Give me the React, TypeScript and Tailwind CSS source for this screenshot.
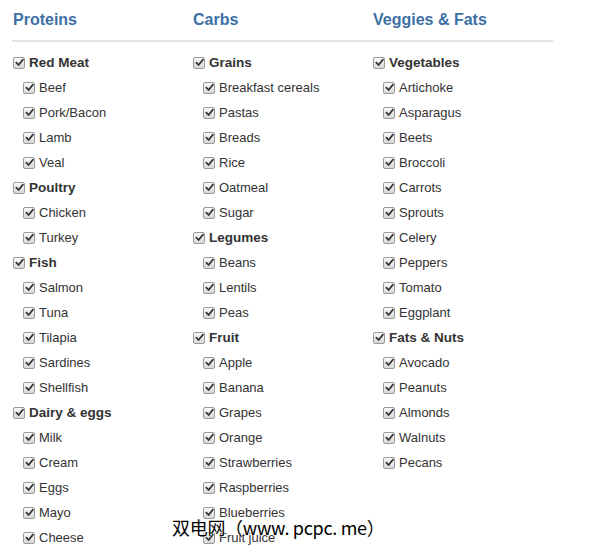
import React from 'react';

type Group = { name: string; items: string[] };
type Column = { title: string; groups: Group[] };

const columns: Column[] = [
  {
    title: 'Proteins',
    groups: [
      { name: 'Red Meat', items: ['Beef', 'Pork/Bacon', 'Lamb', 'Veal'] },
      { name: 'Poultry', items: ['Chicken', 'Turkey'] },
      { name: 'Fish', items: ['Salmon', 'Tuna', 'Tilapia', 'Sardines', 'Shellfish'] },
      { name: 'Dairy & eggs', items: ['Milk', 'Cream', 'Eggs', 'Mayo', 'Cheese'] },
    ],
  },
  {
    title: 'Carbs',
    groups: [
      { name: 'Grains', items: ['Breakfast cereals', 'Pastas', 'Breads', 'Rice', 'Oatmeal', 'Sugar'] },
      { name: 'Legumes', items: ['Beans', 'Lentils', 'Peas'] },
      {
        name: 'Fruit',
        items: ['Apple', 'Banana', 'Grapes', 'Orange', 'Strawberries', 'Raspberries', 'Blueberries', 'Fruit juice'],
      },
    ],
  },
  {
    title: 'Veggies & Fats',
    groups: [
      {
        name: 'Vegetables',
        items: ['Artichoke', 'Asparagus', 'Beets', 'Broccoli', 'Carrots', 'Sprouts', 'Celery', 'Peppers', 'Tomato', 'Eggplant'],
      },
      { name: 'Fats & Nuts', items: ['Avocado', 'Peanuts', 'Almonds', 'Walnuts', 'Pecans'] },
    ],
  },
];

// Greyed checked box, drawn by hand so it looks like the old native one
function Check() {
  return (
    <span className="w-[12px] h-[12px] shrink-0 rounded-[2px] border border-[#9a9a9a] bg-gradient-to-b from-[#fafafa] to-[#d8d8d8] flex items-center justify-center">
      <svg viewBox="0 0 10 10" className="w-[9px] h-[9px]">
        <path d="M1.5 5.2 L4 7.8 L8.8 1.8" fill="none" stroke="#333" strokeWidth="1.9" strokeLinecap="round" strokeLinejoin="round" />
      </svg>
    </span>
  );
}

function Row({ label, bold, indent }: { label: string; bold?: boolean; indent?: boolean }) {
  return (
    <div className={`h-[25px] flex items-center gap-[4px] ${indent ? 'pl-[10px]' : ''}`}>
      <Check />
      <span className={`text-[#333] leading-none ${bold ? 'font-bold text-[13.5px]' : 'text-[13px]'}`}>{label}</span>
    </div>
  );
}

export default function App() {
  return (
    <div className="relative w-[590px] h-[551px] overflow-hidden bg-white font-['Liberation_Sans',Arial,sans-serif]">
      <div className="pl-[13px] w-[553px]">
        <div className="flex h-[40px] items-center">
          {columns.map(col => (
            <div key={col.title} className="w-[180px] text-[16px] font-bold text-[#3c70a4]">
              {col.title}
            </div>
          ))}
        </div>
        <div className="h-[2px] bg-[#e3e3e3] -ml-[1px]" />
        <div className="flex pt-[8px]">
          {columns.map(col => (
            <div key={col.title} className="w-[180px]">
              {col.groups.map(g => (
                <div key={g.name}>
                  <Row label={g.name} bold />
                  {g.items.map(i => (
                    <Row key={i} label={i} indent />
                  ))}
                </div>
              ))}
            </div>
          ))}
        </div>
      </div>
      {/* watermark laid over the list */}
      <div className="absolute left-[172px] top-[518px] text-[18px] tracking-[-0.3px] text-black font-['Noto_Sans_CJK_SC',sans-serif] leading-none [text-shadow:0_0_2px_#fff,0_0_2px_#fff]">
        双电网（www. pcpc. me）
      </div>
    </div>
  );
}
